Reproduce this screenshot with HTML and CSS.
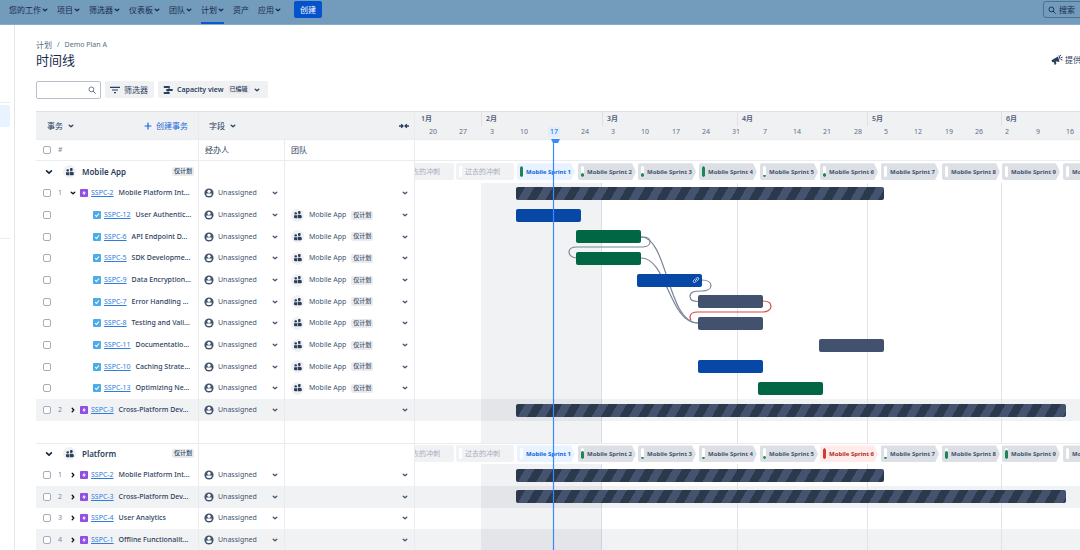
FILE: index.html
```html
<!DOCTYPE html>
<html lang="zh-CN">
<head>
<meta charset="utf-8">
<title>时间线 - Demo Plan A</title>
<link rel="stylesheet" href="styles.css">
</head>
<body>
<svg class="defs" aria-hidden="true">
  <symbol id="chev" viewBox="0 0 6 6"><path d="M1.200 2.200l1.800 1.600 1.800-1.600" fill="none" stroke="currentColor" stroke-width="1.300" stroke-linecap="round" stroke-linejoin="round"/></symbol>
  <symbol id="chev-right" viewBox="0 0 6 6"><path d="M2.200 1.200l1.600 1.800-1.600 1.800" fill="none" stroke="currentColor" stroke-width="1.300" stroke-linecap="round" stroke-linejoin="round"/></symbol>
  <symbol id="search" viewBox="0 0 8 8"><circle cx="3.400" cy="3.400" r="2.400" fill="none" stroke="currentColor" stroke-width=".9"/><path d="M5.300 5.300l2 2" stroke="currentColor" stroke-linecap="round"/></symbol>
  <symbol id="filter" viewBox="0 0 10 8"><path d="M0 1.300h10M2 4h6M4 6.700h2" stroke="currentColor" stroke-width="1.200"/></symbol>
  <symbol id="roadmap" viewBox="0 0 10 10"><path d="M1.500 2h4.500M4 5h5M1.500 8h4.500" stroke="currentColor" stroke-width="1.800" stroke-linecap="round"/><path d="M6 2v3M5 5v3" stroke="currentColor"/></symbol>
  <symbol id="team" viewBox="0 0 8 8"><rect x="0.400" y="1.200" width="2.600" height="2.400" rx="1"/><rect x="4" y="0" width="2.600" height="3" rx="1"/><path d="M0 4.200h3v3H1.200Q0 7.200 0 6z"/><path d="M3.600 3.700h2.600q1.600 0 1.600 1.500V6q0 1.200-1.200 1.200h-3z"/></symbol>
  <symbol id="person" viewBox="0 0 10 10"><circle cx="5" cy="5" r="4.600"/><circle cx="5" cy="3.300" r="1.600" fill="#fff"/><path d="M2.400 5.400h5.200v1.400q0 1.300-2.600 1.300t-2.600-1.300z" fill="#fff"/></symbol>
  <symbol id="epic" viewBox="0 0 8 8"><rect width="8" height="8" rx="1" fill="#904ee2"/><path d="M4.400 1.500L2.200 4.400h1.500v2.100l2.200-2.900H4.400z" fill="#fff"/></symbol>
  <symbol id="task" viewBox="0 0 8 8"><rect width="8" height="8" rx="1" fill="#4bade8"/><path d="M2.200 4.200l1.300 1.300 2.500-3" fill="none" stroke="#fff" stroke-width="1.100"/></symbol>
  <symbol id="collapse" viewBox="0 0 10 6"><path d="M0 3h4M10 3H6M2.200 1.200L4 3 2.200 4.800M7.800 1.200L6 3l1.800 1.800" fill="none" stroke="currentColor" stroke-width="1.300"/></symbol>
  <symbol id="plus" viewBox="0 0 8 8"><path d="M4 1v6M1 4h6" stroke="currentColor" stroke-width="1.200" stroke-linecap="round"/></symbol>
  <symbol id="link" viewBox="0 0 8 8"><path d="M3.400 4.600l1.500-1.500M3.700 2.800l1-1q1-.7 1.700 0t0 1.700l-1 1M4.300 5.200l-1 1q-1 .7-1.700 0t0-1.700l1-1" fill="none" stroke="#fff" stroke-width=".8" stroke-linecap="round"/></symbol>
  <symbol id="horn" viewBox="0 0 12 12"><path d="M.5 6.200L7 2.500l1.600 5.300-3.800-.3.600 2.600-1.600.8L2.700 8 1.200 8.200z"/><path d="M8 1.500l1.200 4M9 2.200l.9-1.400M9.800 3.800l1.700-.6M10 5.400l1.500.8" stroke="currentColor"/></symbol>
</svg>

<header class="topbar">
  <nav class="nav">
    <button>您的工作<svg class="i6"><use href="#chev"/></svg></button>
    <button>项目<svg class="i6"><use href="#chev"/></svg></button>
    <button>筛选器<svg class="i6"><use href="#chev"/></svg></button>
    <button>仪表板<svg class="i6"><use href="#chev"/></svg></button>
    <button>团队<svg class="i6"><use href="#chev"/></svg></button>
    <button class="current">计划<svg class="i6"><use href="#chev"/></svg></button>
    <button>资产</button>
    <button>应用<svg class="i6"><use href="#chev"/></svg></button>
  </nav>
  <button class="create">创建</button>
  <button class="topsearch"><svg class="i8"><use href="#search"/></svg>搜索</button>
</header>

<div class="shell">
  <aside class="side"><div class="side-top"></div><div class="side-current"></div><div class="side-group"></div></aside>
  <main class="main">
    <div class="titlebar">
      <div>
        <div class="crumbs"><a href="#">计划</a><span>/</span><a href="#">Demo Plan A</a></div>
        <h1>时间线</h1>
      </div>
      <button class="feedback"><svg class="i12"><use href="#horn"/></svg>提供反馈</button>
    </div>
    <div class="tools">
      <label class="find"><input type="text" aria-label="搜索事务"><svg class="i8"><use href="#search"/></svg></label>
      <button class="tool"><svg class="i10"><use href="#filter"/></svg>筛选器</button>
      <button class="tool view"><svg class="i10"><use href="#roadmap"/></svg><b>Capacity view</b><span class="badge">已编辑</span><svg class="i6"><use href="#chev"/></svg></button>
    </div>
    <div class="board">
      <table class="issues">
        <thead>
          <tr class="bar-head">
            <th><button>事务<svg class="i6"><use href="#chev"/></svg></button><button class="add"><svg class="i8"><use href="#plus"/></svg>创建事务</button></th>
            <th class="fields"><button>字段<svg class="i6"><use href="#chev"/></svg></button><button aria-label="收起字段"><svg class="i10"><use href="#collapse"/></svg></button></th>
          </tr>
          <tr class="col-head">
            <th><input type="checkbox" aria-label="全选"><span class="num">#</span></th>
            <th>经办人</th>
            <th>团队</th>
          </tr>
        </thead>
        <tbody id="issues"></tbody>
      </table>
      <section class="chart" aria-label="时间线">
        <div class="scale" id="scale"></div>
        <div class="subscale"></div>
        <div class="lanes" id="lanes"></div>
        <div class="today"></div>
      </section>
    </div>
  </main>
</div>
<script src="app.js"></script>
</body>
</html>
```

FILE: styles.css
```css
* { box-sizing: border-box; }
html { height: 100%; overflow: hidden; }
body {
  margin: 0;
  height: 100%;
  overflow: hidden;
  display: flex;
  flex-direction: column;
  background: #fff;
  color: #2c3e5d;
  font: 7px/12px "Noto Sans", "Noto Sans CJK SC", sans-serif;
}
button {
  display: inline-flex;
  align-items: center;
  margin: 0;
  padding: 0;
  border: 0;
  background: none;
  color: inherit;
  font: inherit;
  white-space: nowrap;
}
svg { flex: none; fill: currentColor; }
.defs { display: none; }
.i6 { width: 6px; height: 6px; }
.i8 { width: 8px; height: 8px; }
.i10 { width: 10px; height: 10px; }
.i12 { width: 12px; height: 12px; }

.topbar {
  flex: none;
  display: flex;
  align-items: flex-start;
  height: 25px;
  padding-left: 9px;
  overflow: hidden;
  background: #739bbb;
  border-bottom: 1px solid #8aabc6;
  color: #172b4d;
  font-size: 8px;
}
.nav { display: flex; gap: 9px; height: 24px; }
.nav button { gap: 1px; padding-bottom: 3px; border-bottom: 2px solid transparent; }
.nav .current { border-color: #0c56d0; }
.create {
  justify-content: center;
  margin: 1px 0 0 13px;
  width: 28px;
  height: 17px;
  border-radius: 2px;
  background: #0452cc;
  color: #fff;
}
.topsearch {
  gap: 3px;
  flex: none;
  margin: 1px -24px 0 auto;
  width: 61px;
  height: 17px;
  padding-left: 4px;
  border: 1px solid #50708f;
  border-radius: 3px;
}

.shell { flex: 1; display: flex; min-height: 0; }
.side { flex: none; width: 15px; border-right: 1px solid #e4e6ea; }
.side-top { height: 78px; border-bottom: 1px solid #ebecf0; width: 10px; }
.side-current { width: 10px; height: 22px; margin-top: 2px; border-radius: 0 2px 2px 0; background: #e9f2ff; }
.side-group { width: 10px; height: 112px; border-bottom: 1px solid #ebecf0; }
.main { flex: 1; min-width: 0; padding: 13px 0 0 21px; }

.titlebar { display: flex; justify-content: space-between; height: 43px; }
.crumbs { display: flex; gap: 5px; color: #5e6c84; line-height: 14px; }
.crumbs a { color: inherit; text-decoration: none; }
.crumbs a:first-child { font-size: 8px; }
h1 { margin: 0; font-size: 13px; line-height: 17px; font-weight: 400; color: #172b4d; }
.feedback { gap: 2px; margin-right: -17px; font-size: 8px; height: 43px; color: #2c3e5d; }

.tools { display: flex; gap: 4px; height: 30px; }
.find {
  display: flex;
  align-items: center;
  width: 65px;
  height: 18px;
  padding-right: 4px;
  border: 1px solid #b9bfca;
  border-radius: 2px;
  color: #5e6c84;
}
.find input { flex: 1; min-width: 0; border: 0; padding: 0 4px; background: none; font: inherit; outline: 0; }
.tool { gap: 4px; height: 17px; padding: 0 6px 0 5px; border-radius: 2px; background: #f0f1f3; font-size: 8px; }
.tool b { font-size: 7px; font-weight: 600; }
.view { padding-right: 8px; }
.badge {
  flex: none;
  padding: 0 2px;
  border-radius: 2px;
  background: #e9ebee;
  font-size: 6px;
  line-height: 9px;
  font-weight: 500;
}

.board { display: flex; border-top: 1px solid #dfe1e6; }
.issues { flex: none; display: block; width: 379px; border-collapse: collapse; }
.issues thead { display: block; }
.issues tr { display: grid; grid-template-columns: 163px 86px 130px; }
.issues th, .issues td {
  display: flex;
  align-items: center;
  min-width: 0;
  padding: 0;
  border-right: 1px solid #e9ebee;
  text-align: left;
  font-weight: 400;
  white-space: nowrap;
}
.issues .bar-head { height: 27px; background: #f0f1f3; font-size: 8px; }
.bar-head th { justify-content: space-between; padding: 0 10px 0 11px; }
.bar-head .fields { grid-column: span 2; padding: 0 5px 0 10px; }
.bar-head button { gap: 5px; }
.bar-head .add { gap: 4px; color: #1868db; }
.issues .col-head { height: 22px; border-bottom: 1px solid #ebecf0; border-top: 1px solid #ebecf0; }
.issues .col-head th { padding-left: 6px; font-size: 8px; }
.issues .col-head th:first-child { padding-left: 7px; }
.col-head .num { font-size: 7px; }
input[type="checkbox"] {
  appearance: none;
  flex: none;
  width: 8px;
  height: 8px;
  margin: 0 7px 0 0;
  border: 1px solid #a5adba;
  border-radius: 2px;
  background: #fff;
}
.issues tbody, .lanes { display: grid; grid-auto-rows: 1fr; min-height: 390px; }
.issues td:first-child { padding: 0 4px 0 7px; }
.alt { background: #f1f2f4; }
.num { width: 12px; color: #7a869a; }
.twisty { width: 10px; color: #111; }
.key { margin: 0 5px 0 3px; color: #2f7de1; text-decoration: underline; }
.title { font-weight: 500; }
.child { margin-left: 35px; }
.issues .group { border-top: 1px solid #ebecf0; }
.issues tbody .group:first-child { border-top: 0; }
.group .name { flex: 1; font-size: 8px; font-weight: 600; margin-left: 6px; }
.issues .group td:first-child { padding-left: 9px; }
.group .i6 { width: 8px; height: 8px; color: #172b4d; }
.avatar {
  display: grid;
  place-items: center;
  width: 13px;
  height: 13px;
  border-radius: 50%;
  background: #f0f1f3;
  color: #2c3e5d;
}
.group .avatar { margin-left: 10px; }
.pick { flex: 1; gap: 4px; padding: 0 6px 0 5px; color: #44546f; }
.pick .avatar { margin: 0 1px; }
.pick .badge { margin-left: 1px; }
.pick .i6:last-child { margin-left: auto; }

.chart { flex: 1; min-width: 0; position: relative; overflow: hidden; }
.scale { position: relative; height: 27px; background: #f0f1f3; overflow: hidden; color: #505f79; }
.month { position: absolute; top: 0; height: 14px; padding-left: 4px; line-height: 14px; font-weight: 600; border-left: 1px solid #dfe1e6; }
.month:first-child { border-left-color: transparent; }
.week { position: absolute; top: 15px; line-height: 10px; border-radius: 2px; color: #626f86; }
.week.now { background: #e0edff; color: #0c66e4; box-shadow: -2px 0 #e0edff, 2px 0 #e0edff; }
.subscale { height: 22px; border-top: 1px solid #ebecf0; border-bottom: 1px solid #ebecf0; }
.lanes { position: relative; }
.lane { position: relative; display: flex; align-items: center; }
.lane.sprints { z-index: 2; background: #fff; border-top: 1px solid #ebecf0; }
.lane.sprints:first-child { border-top: 0; }
.shade { position: absolute; top: 0; bottom: 0; z-index: 1; background: #091e420f; border-right: 1px solid #091e4218; }
.line { position: absolute; top: 0; bottom: 0; z-index: 1; width: 1px; background: #e1e3e8; }
.links { position: absolute; top: 0; left: 0; z-index: 2; width: 665px; height: 390px; fill: none; stroke: #7a869a; stroke-width: 1.2; }
.links .late { stroke: #d64a43; }
.bar {
  position: absolute;
  z-index: 3;
  display: flex;
  align-items: center;
  justify-content: flex-end;
  height: 13px;
  padding-right: 2px;
  border-radius: 2px;
}
.blue { background: #0747a6; }
.green { background: #006644; }
.slate { background: #42526e; }
.roll { background: repeating-linear-gradient(120deg, #2c394d 0 8px, #44546f 8px 16px); }
.sprint {
  position: absolute;
  display: flex;
  align-items: center;
  gap: 3px;
  width: 58px;
  height: 17px;
  padding: 0 3px 0 3px;
  border-radius: 2px;
  background: #dcdfe4;
  color: #44546f;
  clip-path: polygon(0 0, 54px 0, 58px 50%, 54px 100%, 0 100%);
  font-size: 6px;
  font-weight: 700;
  white-space: nowrap;
}
.sprint span { overflow: hidden; text-overflow: clip; }
.sprint.past { clip-path: none; background: #f1f2f4; color: #a5adba; font-size: 7px; font-weight: 400; padding-right: 0; }
.sprint.active { background: #e9f2ff; color: #0c66e4; }
.sprint.over { background: #ffebe9; color: #ae2e24; }
.meter { flex: none; display: flex; align-items: flex-end; width: 3px; height: 11px; border-radius: 2px; background: #fff; overflow: hidden; }
.meter i { width: 3px; border-radius: 2px; background: #1f845a; }
.over .meter i { background: #d43b32; }
.today { position: absolute; z-index: 5; top: 27px; bottom: 0; left: 138px; width: 1px; background: #388bff; box-shadow: 0 0 1px #388bff; }
.today::before {
  content: "";
  position: absolute;
  top: 0;
  left: -2px;
  border: solid transparent;
  border-width: 4px 2px 0;
  border-top-color: #388bff;
  width: 5px;
}
```

FILE: app.js
```js
const DAY = 13 / 3;
const FEB = 66;
const at = (day) => Math.round(FEB + day * DAY);
const icon = (id, size) => `<svg class="i${size}"><use href="#${id}"/></svg>`;

const epic2 = { num: 1, key: "SSPC-2", name: "Mobile Platform Int...", bar: ["roll", 8, 85] };
const epic3 = { num: 2, key: "SSPC-3", name: "Cross-Platform Dev...", alt: true, bar: ["roll", 8, 127] };
const rows = [
  { group: "Mobile App", fill: [100, 35, 35, 100, 20, 35, 0, 0, 0, 0] },
  { ...epic2, open: true },
  { key: "SSPC-12", name: "User Authentic...", bar: ["blue", 8, 15] },
  { key: "SSPC-6", name: "API Endpoint D...", bar: ["green", 22, 15] },
  { key: "SSPC-5", name: "SDK Developme...", bar: ["green", 22, 15] },
  { key: "SSPC-9", name: "Data Encryption...", bar: ["blue", 36, 15], linked: true },
  { key: "SSPC-7", name: "Error Handling ...", bar: ["slate", 50, 15] },
  { key: "SSPC-8", name: "Testing and Vali...", bar: ["slate", 50, 15] },
  { key: "SSPC-11", name: "Documentatio...", bar: ["slate", 78, 15] },
  { key: "SSPC-10", name: "Caching Strate...", bar: ["blue", 50, 15] },
  { key: "SSPC-13", name: "Optimizing Ne...", bar: ["green", 64, 15] },
  epic3,
  { blank: true },
  { group: "Platform", fill: [0, 75, 20, 20, 35, 100, 20, 75, 90, 0], over: 6 },
  epic2,
  epic3,
  { num: 3, key: "SSPC-4", name: "User Analytics" },
  { num: 4, key: "SSPC-1", name: "Offline Functionalit...", alt: true },
];

function issueRow(r) {
  if (r.blank) return "<tr><td></td><td></td><td></td></tr>";
  if (r.group) {
    return `<tr class="group"><td><button aria-label="收起">${icon("chev", 6)}</button><span class="avatar">${icon("team", 8)}</span><span class="name">${r.group}</span><span class="badge">仅计划</span></td><td></td><td></td></tr>`;
  }
  const lead = r.num
    ? `<span class="num">${r.num}</span><button class="twisty" aria-label="展开">${icon(r.open ? "chev" : "chev-right", 6)}</button>${icon("epic", 8)}`
    : `<span class="child"></span>${icon("task", 8)}`;
  const team = r.num ? "" : `<span class="avatar">${icon("team", 8)}</span><span>Mobile App</span><span class="badge">仅计划</span>`;
  return `<tr class="${r.alt ? "alt" : ""}"><td><input type="checkbox" aria-label="${r.key}">${lead}<a class="key" href="#">${r.key}</a><span class="title">${r.name}</span></td>
    <td><button class="pick">${icon("person", 10)}Unassigned${icon("chev", 6)}</button></td>
    <td><button class="pick" aria-label="团队">${team}${icon("chev", 6)}</button></td></tr>`;
}

function sprint(left, cls, label, fill) {
  return `<div class="sprint ${cls}" style="left:${left}px"><div class="meter"><i style="height:${fill}%"></i></div><span>${label}</span></div>`;
}

function lane(r) {
  if (r.group) {
    const past = [-2, -1].map((n) => sprint(Math.round(102 + n * 14 * DAY), "past", "过去的冲刺", 0));
    const next = r.fill.map((f, i) => {
      const cls = i === 0 ? "active" : i + 1 === r.over ? "over" : "";
      return sprint(Math.round(102 + i * 14 * DAY), cls, `Mobile Sprint ${i + 1}`, f);
    });
    return `<div class="lane sprints">${past.join("")}${next.join("")}</div>`;
  }
  const bar = r.bar
    ? `<div class="bar ${r.bar[0]}" style="left:${at(r.bar[1])}px;width:${Math.round(r.bar[2] * DAY)}px">${r.linked ? icon("link", 8) : ""}</div>`
    : "";
  return `<div class="lane ${r.alt ? "alt" : ""}">${bar}</div>`;
}

const months = [["1月", -15], ["2月", 0], ["3月", 28], ["4月", 59], ["5月", 89], ["6月", 120]];
const weeks = [20, 27, 3, 10, 17, 24, 3, 10, 17, 24, 31, 7, 14, 21, 28, 5, 12, 19, 26, 2, 9, 16];

document.getElementById("issues").innerHTML = rows.map(issueRow).join("");
document.getElementById("scale").innerHTML =
  months.map(([t, d]) => `<div class="month" style="left:${Math.max(0, at(d))}px">${t}</div>`).join("") +
  weeks.map((w, i) => `<div class="week${i === 4 ? " now" : ""}" style="left:${at(i * 7 - 12)}px">${w}</div>`).join("");
document.getElementById("lanes").innerHTML =
  rows.map(lane).join("") +
  `<div class="shade" style="left:${at(0)}px;width:${at(28) - at(0)}px"></div>` +
  months.slice(3).map(([, d]) => `<div class="line" style="left:${at(d)}px"></div>`).join("") +
  `<svg class="links" viewBox="0 0 665 390">
    <path d="M226 76h2c5 0 7 2 7 5s-3 5-7 5H162c-5 0-8 2-8 5s3 6 8 6"/>
    <path d="M226 76C253 76 252 162 283 162"/>
    <path d="M226 97C252 97 254 162 283 162"/>
    <path d="M287 119c5 0 9 2 9 5.500s-4 5.500-9 5.500c-8 0-12 1-12 5.500s4 5 8 5"/>
    <path class="late" d="M348 140c5 0 8 2 8 5.500s-4 5.500-8 5.500H283c-5 0-8 2-8 5q0 2 1 3"/>
  </svg>`;
```
